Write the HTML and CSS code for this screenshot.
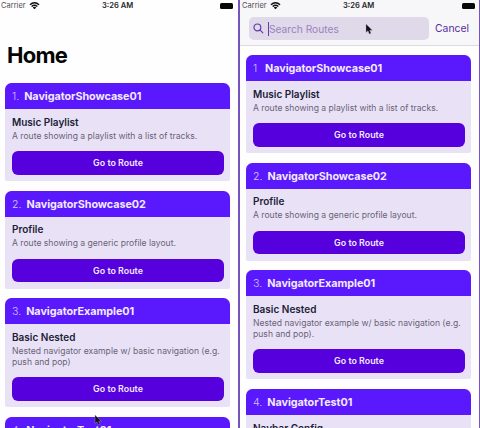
FILE: index.html
```html
<!DOCTYPE html>
<html lang="en">
<head>
<meta charset="utf-8">
<title>Navigator Routes</title>
<link rel="stylesheet" href="styles.css">
</head>
<body>
<main class="screens">
  <section class="phone phone-home">
    <div class="status">
      <span class="carrier">Carrier</span>
      <svg class="wifi" viewBox="0 0 20 14"><path d="M1.500 5.200Q10-2.400 18.500 5.200M4.700 8.500Q10 3.800 15.300 8.500" fill="none" stroke="currentColor" stroke-width="2.700"/><path d="M6.700 10.200Q10 7.700 13.300 10.200L10 13.700Z" fill="currentColor"/></svg>
      <span class="time">3:26 AM</span>
      <span class="battery"></span>
    </div>
    <h1 class="heading"><span>Home</span></h1>
    <div class="list">
      <article class="card">
        <header class="card-head"><span class="num">1.</span><span class="name">NavigatorShowcase01</span></header>
        <div class="card-body"><h2>Music Playlist</h2><p>A route showing a playlist with a list of tracks.</p><button>Go to Route</button></div>
      </article>
      <article class="card">
        <header class="card-head"><span class="num">2.</span><span class="name">NavigatorShowcase02</span></header>
        <div class="card-body"><h2>Profile</h2><p>A route showing a generic profile layout.</p><button>Go to Route</button></div>
      </article>
      <article class="card">
        <header class="card-head"><span class="num">3.</span><span class="name">NavigatorExample01</span></header>
        <div class="card-body"><h2>Basic Nested</h2><p>Nested navigator example w/ basic navigation (e.g.<br>push and pop)</p><button>Go to Route</button></div>
      </article>
      <article class="card">
        <header class="card-head"><span class="num">4.</span><span class="name">NavigatorTest01</span></header>
      </article>
    </div>
    <svg class="cursor cursor-home" viewBox="0 0 8 12"><path d="M1 1V9.500L3 7.800L4.300 11L6 10.200L4.700 7.200H7.300Z"/></svg>
  </section>
  <section class="phone phone-search">
    <div class="status">
      <span class="carrier">Carrier</span>
      <svg class="wifi" viewBox="0 0 20 14"><path d="M1.500 5.200Q10-2.400 18.500 5.200M4.700 8.500Q10 3.800 15.300 8.500" fill="none" stroke="currentColor" stroke-width="2.700"/><path d="M6.700 10.200Q10 7.700 13.300 10.200L10 13.700Z" fill="currentColor"/></svg>
      <span class="time">3:26 AM</span>
      <span class="battery"></span>
    </div>
    <div class="searchbar">
      <div class="field">
        <svg class="glass" viewBox="0 0 12 12"><circle cx="4.800" cy="4.800" r="3.700"/><path d="M7.500 7.500L11 11"/></svg>
        <span class="caret"></span><span class="placeholder">Search Routes</span>
      </div>
      <span class="cancel">Cancel</span>
    </div>
    <div class="list">
      <article class="card">
        <header class="card-head"><span class="num num-first">1</span><span class="name">NavigatorShowcase01</span></header>
        <div class="card-body"><h2>Music Playlist</h2><p>A route showing a playlist with a list of tracks.</p><button>Go to Route</button></div>
      </article>
      <article class="card">
        <header class="card-head"><span class="num">2.</span><span class="name">NavigatorShowcase02</span></header>
        <div class="card-body"><h2>Profile</h2><p>A route showing a generic profile layout.</p><button>Go to Route</button></div>
      </article>
      <article class="card">
        <header class="card-head"><span class="num">3.</span><span class="name">NavigatorExample01</span></header>
        <div class="card-body"><h2>Basic Nested</h2><p>Nested navigator example w/ basic navigation (e.g.<br>push and pop).</p><button>Go to Route</button></div>
      </article>
      <article class="card">
        <header class="card-head"><span class="num">4.</span><span class="name">NavigatorTest01</span></header>
        <div class="card-body"><h2>Navbar Config</h2></div>
      </article>
    </div>
    <svg class="cursor cursor-search" viewBox="0 0 8 12"><path d="M1 1V9.500L3 7.800L4.300 11L6 10.200L4.700 7.200H7.300Z"/></svg>
  </section>
</main>
</body>
</html>
```
FILE: styles.css
```css
* { box-sizing: border-box; }
body { margin: 0; background: #fff; font-family: Inter, "Liberation Sans", sans-serif; overflow: hidden; }
.screens { display: grid; grid-template-columns: 238px 242px; height: 428px; overflow: hidden; }
.phone { position: relative; height: 428px; overflow: hidden; background: #fefefe; }
.phone-search { border-left: 2px solid #7355bd; border-right: 1px solid #7355bd; }
.status { display: grid; grid-template-columns: 25px 11px 1fr 14px; align-items: center; column-gap: 3px; height: 11px; padding: 0 4px 0 1px; font-size: 7.500px; color: #29272c; }
.phone-search .status { padding-left: 2px; padding-right: 3px; background: #f7f6f8; }
.carrier { color: #514d56; }
.wifi { width: 11px; height: 7.500px; color: #111; }
.time { font-weight: 600; font-size: 7.600px; white-space: nowrap; padding-left: 59px; }
.battery { width: 13px; height: 6px; background: #080808; border-radius: 1.500px; }
.heading { margin: 0; height: 72px; padding: 31px 0 0 7px; font-size: 22px; line-height: 27px; font-weight: 700; letter-spacing: -0.750px; color: #050505; }
.list { display: flex; flex-direction: column; gap: 9.700px; padding: 0 8px 0 5px; }
.phone-search .list { padding: 9px 8px 0 6px; }
.card { flex: none; border-radius: 6.500px 6.500px 2px 2px; overflow: hidden; background: #e9e2f6; }
.card-head { display: flex; align-items: center; gap: 5px; height: 26px; padding: 1px 7px 0; background: #5919fc; color: #f3eaff; font-size: 10.600px; }
.num { font-weight: 300; color: #d7c1ff; }
.num-first { width: 7px; }
.name { font-weight: 700; font-size: 10.800px; letter-spacing: -0.050px; }
.card-body { padding: 6.500px 7px 6.500px; }
h2 { margin: 0; font-size: 10px; line-height: 13px; font-weight: 600; color: #211d36; }
p { margin: 2px 0 9.500px; font-size: 8.600px; line-height: 11px; color: #696376; white-space: nowrap; }
button { display: block; width: 212px; height: 23.500px; margin: 0; padding: 0; border: 0; border-radius: 6px; background: #5500dd; color: #f3e8ff; font: 600 8.900px/23.500px Inter, sans-serif; }
.searchbar { display: flex; align-items: center; height: 35px; padding: 1px 0 0 9px; background: #f7f6f8; border-bottom: 1px solid #dedae2; }
.field { display: flex; align-items: center; width: 180px; height: 23px; padding-left: 4px; border-radius: 5px; background: #dfd9e9; }
.glass { width: 11px; height: 11px; fill: none; stroke: #6239ac; stroke-width: 1.300; }
.caret { width: 1.500px; height: 14px; margin-left: 3.500px; background: #633bb3; }
.placeholder { font-size: 10.200px; color: #9a83bc; }
.cancel { margin-left: 6px; font-size: 10.400px; color: #57309e; }
.cursor { position: absolute; width: 8px; height: 12px; fill: #111; stroke: #aaa2bd; stroke-width: 0.400; }
.cursor-home { left: 94px; top: 414px; }
.cursor-search { left: 125px; top: 23px; }
```
